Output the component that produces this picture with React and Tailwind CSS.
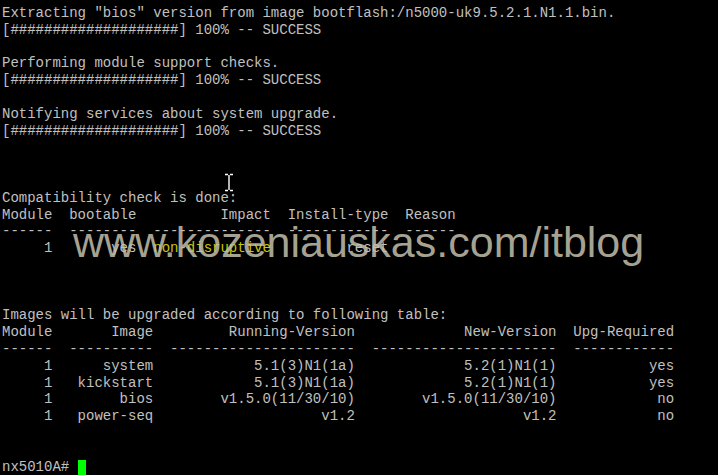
const bar = "[####################] 100% -- SUCCESS";

const t1 = (a, b, c, d, e) =>
  [a.padStart(6), b.padStart(8), c.padStart(14), d.padStart(12), e.padStart(6)].join("  ");

const t2 = (a, b, c, d, e) =>
  [a.padStart(6), b.padStart(10), c.padStart(22), d.padStart(22), e.padStart(12)].join("  ");

const images = [
  ["system", "5.1(3)N1(1a)", "5.2(1)N1(1)", "yes"],
  ["kickstart", "5.1(3)N1(1a)", "5.2(1)N1(1)", "yes"],
  ["bios", "v1.5.0(11/30/10)", "v1.5.0(11/30/10)", "no"],
  ["power-seq", "v1.2", "v1.2", "no"],
];

const Line = ({ children }) => (
  <div className="h-[16.8px] leading-[16.8px] whitespace-pre">{children}</div>
);

const App = () => {
  const lines = [
    'Extracting "bios" version from image bootflash:/n5000-uk9.5.2.1.N1.1.bin.',
    bar,
    "",
    "Performing module support checks.",
    bar,
    "",
    "Notifying services about system upgrade.",
    bar,
    "",
    "",
    "",
    "Compatibility check is done:",
    t1("Module", "bootable", "Impact", "Install-type", "Reason"),
    t1("------", "--------", "--------------", "------------", "------"),
  ];

  const after = [
    "",
    "",
    "",
    "Images will be upgraded according to following table:",
    t2("Module", "Image", "Running-Version", "New-Version", "Upg-Required"),
    t2("------", "----------", "----------------------", "----------------------", "------------"),
    ...images.map((r) => t2("1", ...r)),
    "",
    "",
  ];

  return (
    <div className="relative h-[475px] w-[718px] overflow-hidden bg-black">
      <div className="pl-[2px] pt-[5px] font-['Liberation_Mono',monospace] text-[14px] text-[#c0c0c0]">
        {lines.map((l, i) => (
          <Line key={i}>{l}</Line>
        ))}
        <Line>
          {"     1       yes  "}
          <span className="text-[#c8c800]">non-disruptive</span>
          {"         reset"}
        </Line>
        {after.map((l, i) => (
          <Line key={"a" + i}>{l}</Line>
        ))}
        <Line>
          {"nx5010A# "}
          <span className="inline-block h-[15px] w-[8px] bg-[#00ff00] align-[-4px]" />
        </Line>
      </div>

      {/* watermark */}
      <div className="absolute left-[73px] top-[221px] font-['Liberation_Sans',Arial,sans-serif] text-[43px] leading-[43px] whitespace-nowrap text-[#c4c0ad]/85">
        www.kozeniauskas.com/itblog
      </div>

      {/* mouse I-beam */}
      <svg
        className="absolute left-[224px] top-[173px]"
        width="10"
        height="19"
        viewBox="0 0 10 19"
      >
        <path
          d="M1 1.5h3M6 1.5h3M5 2v15M1 17.5h3M6 17.5h3"
          stroke="#000"
          strokeWidth="3"
          fill="none"
        />
        <path
          d="M1 1.5h3M6 1.5h3M5 2v15M1 17.5h3M6 17.5h3"
          stroke="#fff"
          strokeWidth="1.4"
          fill="none"
        />
      </svg>
    </div>
  );
};

export default App;
